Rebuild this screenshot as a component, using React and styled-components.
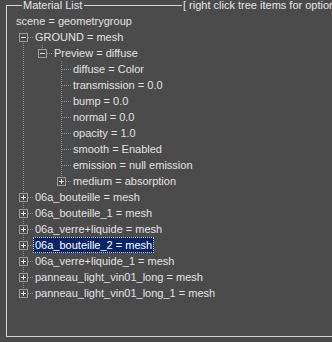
import React from 'react'
import styled, { createGlobalStyle } from 'styled-components'

const GlobalStyle = createGlobalStyle`
  html, body {
    margin: 0;
    padding: 0;
    background: #4b4b4b;
    overflow: hidden;
  }
  body {
    font-family: "Liberation Sans", Arial, sans-serif;
    font-size: 11px;
    color: #e2e2e2;
  }
`

const rows = [
  { label: 'scene = geometrygroup', gutters: [], cell: null },
  { label: 'GROUND = mesh', gutters: [], cell: 'first', btn: 'minus' },
  { label: 'Preview = diffuse', gutters: ['pipe'], cell: 'corner', btn: 'minus' },
  { label: 'diffuse = Color', gutters: ['pipe', 'blank'], cell: 'tee' },
  { label: 'transmission = 0.0', gutters: ['pipe', 'blank'], cell: 'tee' },
  { label: 'bump = 0.0', gutters: ['pipe', 'blank'], cell: 'tee' },
  { label: 'normal = 0.0', gutters: ['pipe', 'blank'], cell: 'tee' },
  { label: 'opacity = 1.0', gutters: ['pipe', 'blank'], cell: 'tee' },
  { label: 'smooth = Enabled', gutters: ['pipe', 'blank'], cell: 'tee' },
  { label: 'emission = null emission', gutters: ['pipe', 'blank'], cell: 'tee' },
  { label: 'medium = absorption', gutters: ['pipe', 'blank'], cell: 'corner', btn: 'plus' },
  { label: '06a_bouteille = mesh', gutters: [], cell: 'tee', btn: 'plus' },
  { label: '06a_bouteille_1 = mesh', gutters: [], cell: 'tee', btn: 'plus' },
  { label: '06a_verre+liquide = mesh', gutters: [], cell: 'tee', btn: 'plus' },
  { label: '06a_bouteille_2 = mesh', gutters: [], cell: 'tee', btn: 'plus', selected: true },
  { label: '06a_verre+liquide_1 = mesh', gutters: [], cell: 'tee', btn: 'plus' },
  { label: 'panneau_light_vin01_long = mesh', gutters: [], cell: 'tee', btn: 'plus' },
  { label: 'panneau_light_vin01_long_1 = mesh', gutters: [], cell: 'corner', btn: 'plus' },
]

const DOT = '#8e8e8e'

const Connector = ({ kind, btn }) => {
  const hasV = kind !== 'blank'
  const y1 = kind === 'first' ? 8 : 0
  const y2 = kind === 'corner' ? 8 : 16
  const hasH = kind === 'tee' || kind === 'corner' || kind === 'first'
  return (
    <Cell>
      <svg width="19" height="16" viewBox="0 0 19 16">
        {hasV && (
          <line x1="9.5" y1={y1} x2="9.5" y2={y2} stroke={DOT} strokeDasharray="1 1" />
        )}
        {hasH && (
          <line x1={btn ? 14 : 10} y1="8.5" x2="19" y2="8.5" stroke={DOT} strokeDasharray="1 1" />
        )}
        {btn && (
          <g>
            <rect x="5.5" y="4.5" width="8" height="8" fill="#4b4b4b" stroke="#9c9c9c" />
            <line x1="7" y1="8.5" x2="12" y2="8.5" stroke="#e6e6e6" />
            {btn === 'plus' && <line x1="9.5" y1="6" x2="9.5" y2="11" stroke="#e6e6e6" />}
          </g>
        )}
      </svg>
    </Cell>
  )
}

const App = () => (
  <Page>
    <GlobalStyle />
    <Frame>
      <Header>
        <TitleSlot>
          <Caption>Material List</Caption>
        </TitleSlot>
        <Caption>[ right click tree items for options ]</Caption>
      </Header>
      <Tree>
        {rows.map((row, i) => (
          <Row key={i}>
            {row.gutters.map((g, j) => (
              <Connector key={j} kind={g} />
            ))}
            {row.cell && <Connector kind={row.cell} btn={row.btn} />}
            <Label selected={row.selected}>{row.label}</Label>
          </Row>
        ))}
      </Tree>
    </Frame>
  </Page>
)

export default App

const Page = styled.div`
  width: 332px;
  height: 342px;
  overflow: hidden;
  padding-top: 5px;
  box-sizing: border-box;
`

const Frame = styled.div`
  margin-left: 6px;
  width: 340px;
  height: 332px;
  box-sizing: border-box;
  border: 1px solid #d6d6d6;
`

const Header = styled.div`
  margin-top: -7px;
  padding-left: 15px;
  height: 12px;
  line-height: 12px;
  display: flex;
  white-space: nowrap;
`

const TitleSlot = styled.div`
  flex: 0 0 160px;
`

const Caption = styled.span`
  flex-shrink: 0;
  padding: 0 2px 0 1px;
  background: #4b4b4b;
  color: #e6e6e6;
`

const Tree = styled.div`
  margin-top: 2px;
  padding-left: 7px;
  display: flex;
  flex-direction: column;
`

const Row = styled.div`
  display: flex;
  height: 16px;
`

const Cell = styled.div`
  width: 19px;
  height: 16px;
  flex-shrink: 0;
  svg {
    display: block;
  }
`

const Label = styled.span`
  padding: 0 2px;
  height: 16px;
  line-height: 16px;
  white-space: nowrap;
  background: ${p => (p.selected ? '#0a246a' : 'transparent')};
  color: ${p => (p.selected ? '#ffffff' : '#e2e2e2')};
  outline: ${p => (p.selected ? '1px dotted #d0d0d0' : 'none')};
  outline-offset: -1px;
`
